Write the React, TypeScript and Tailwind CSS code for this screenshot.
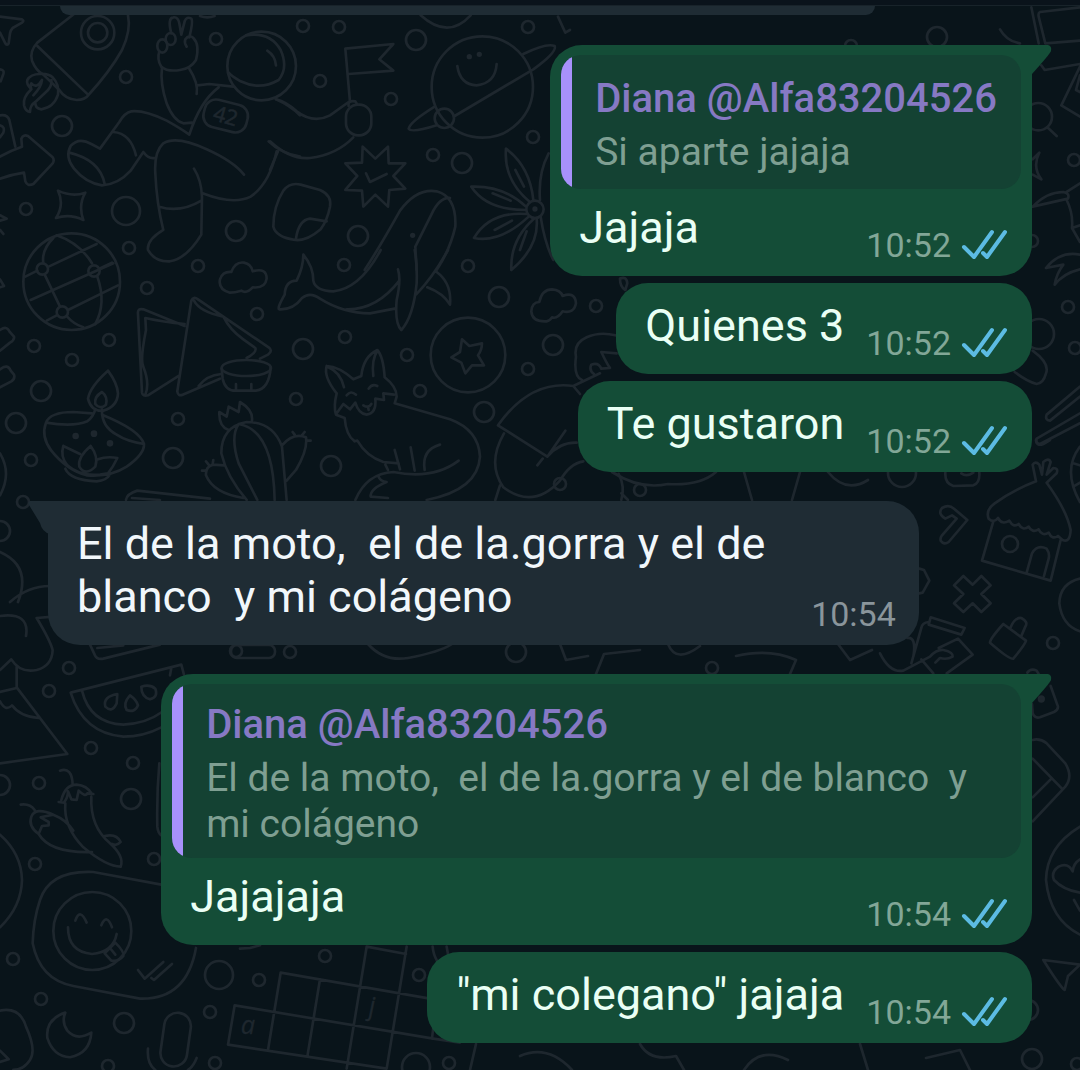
import type { ReactNode } from 'react';
import clsx from 'clsx';

interface Message {
  id: number;
  text: string;
  time: string;
  mine: boolean;
  tail?: boolean;
  quote?: { author: string; text: string };
}

const messages: Message[] = [
  {
    id: 1,
    text: 'Jajaja',
    time: '10:52',
    mine: true,
    tail: true,
    quote: { author: 'Diana @Alfa83204526', text: 'Si aparte jajaja' },
  },
  { id: 2, text: 'Quienes 3', time: '10:52', mine: true },
  { id: 3, text: 'Te gustaron', time: '10:52', mine: true },
  {
    id: 4,
    text: 'El de la moto,  el de la.gorra y el de blanco  y mi colágeno',
    time: '10:54',
    mine: false,
    tail: true,
  },
  {
    id: 5,
    text: 'Jajajaja',
    time: '10:54',
    mine: true,
    tail: true,
    quote: {
      author: 'Diana @Alfa83204526',
      text: 'El de la moto,  el de la.gorra y el de blanco  y mi colágeno',
    },
  },
  { id: 6, text: '"mi colegano" jajaja', time: '10:54', mine: true },
];

// x, y, r
const dots = [
  [216, 39, 6], [126, 77, 6], [62, 126, 10], [26, 209, 6], [126, 211, 14], [129, 248, 6],
  [236, 231, 10], [198, 266, 6], [303, 26, 6], [339, 27, 6], [320, 81, 6], [416, 40, 10],
  [391, 99, 6], [528, 27, 6], [533, 137, 6], [433, 155, 6], [462, 163, 10], [358, 236, 10],
  [344, 265, 6], [468, 266, 6], [147, 288, 6], [257, 314, 6], [34, 346, 6], [109, 340, 6],
  [72, 360, 6], [41, 391, 10], [303, 349, 10], [16, 423, 10], [296, 399, 6], [178, 419, 6],
  [173, 458, 10], [31, 460, 6], [23, 502, 6], [345, 337, 6], [407, 355, 6], [499, 297, 10],
  [553, 345, 10], [596, 306, 6], [528, 369, 6], [420, 391, 6], [484, 412, 10], [331, 466, 10],
  [69, 668, 6], [49, 691, 6], [91, 748, 6], [133, 763, 6], [39, 783, 6], [131, 799, 10],
  [0, 785, 10], [35, 864, 6], [154, 859, 6], [13, 959, 6], [219, 975, 14], [41, 999, 6],
  [124, 1023, 10], [210, 1012, 6], [215, 1063, 6], [108, 1066, 6], [236, 651, 6], [325, 956, 6],
  [259, 980, 6], [419, 975, 6], [416, 1067, 14], [449, 1063, 6], [902, 473, 14], [1010, 544, 8],
  [1053, 643, 6], [0, 531, 10], [290, 652, 6], [1074, 160, 6], [1032, 241, 6], [1068, 307, 6],
  [1075, 348, 6], [1039, 334, 15], [1032, 1059, 10], [1077, 1064, 6], [1028, 1010, 10],
  [937, 37, 10], [851, 46, 6], [516, 652, 10], [712, 668, 6], [640, 490, 6], [560, 484, 6],
];

function Doodles({ x, y, children }: { x: number; y: number; children: ReactNode }) {
  return <g transform={`translate(${x} ${y}) scale(0.3333)`}>{children}</g>;
}

function Wallpaper() {
  return (
    <svg
      aria-hidden="true"
      viewBox="0 0 1080 1070"
      preserveAspectRatio="xMidYMin slice"
      className="absolute inset-0 w-full h-full"
      fill="none"
      stroke="#1e272e"
      strokeWidth={8}
      strokeLinecap="round"
      strokeLinejoin="round"
    >
      <g strokeWidth={2.7}>
        {dots.map(([cx, cy, r]) => (
          <circle key={`${cx}-${cy}`} cx={cx} cy={cy} r={r} />
        ))}
      </g>

      <Doodles x={0} y={0}>
        {/* plane */}
        <path d="M0 50L66 58Q74 62 66 68L38 84Q32 90 30 100L26 130Q22 138 16 130L0 98" />
        <path d="M0 208Q14 210 10 222L2 244M0 346Q22 342 28 360L46 440M0 376Q16 380 10 398L0 412" />
        {/* rocket */}
        <path d="M222 42L112 128Q88 154 96 182Q108 212 130 224L178 270Q196 298 230 300Q256 300 268 282Q330 214 366 150Q394 90 384 46M112 138L264 284" />
        <circle cx="293" cy="98" r="50" />
        <circle cx="293" cy="98" r="29" />
        <path d="M120 222Q92 222 82 240Q78 252 94 268Q68 292 72 316Q76 334 90 336Q90 316 106 306Q104 326 124 328Q162 322 174 284Q178 252 158 232Q144 220 120 222M94 268Q90 256 94 250Q110 268 126 240Q124 262 100 286M154 240Q158 260 134 280L106 306" />
        {/* arrow */}
        <path d="M0 470Q30 452 66 440L64 416Q70 402 84 408L158 472Q164 480 158 490L100 552Q82 560 76 544L72 518Q32 524 0 536" />
        <path d="M174 572Q216 592 256 578Q234 616 250 660Q210 640 168 654Q194 614 174 572ZM0 646L20 656L0 662M0 690L10 702" />
        {/* astronaut */}
        <circle cx="785" cy="198" r="103" />
        <path d="M738 106Q810 94 842 150Q866 204 836 240Q780 272 722 244Q694 228 686 218M802 152Q826 168 828 196" />
        <path d="M484 200Q470 178 478 154M484 200Q502 216 540 210Q572 206 588 180Q600 134 580 114Q568 102 556 118Q552 128 560 140M514 100Q502 54 520 52Q534 50 538 70L544 104M544 104L554 64Q560 48 574 56Q580 64 568 112" />
        <ellipse cx="487" cy="138" rx="15" ry="20" />
        <ellipse cx="512" cy="117" rx="15" ry="18" />
        <path d="M486 202Q480 250 500 310Q520 362 550 370L576 368M568 206Q596 250 590 282M592 256L628 252L700 260M656 262Q600 304 568 404Q540 384 500 362Q434 330 394 334Q374 338 358 366L300 446L274 432Q236 410 212 438Q194 470 222 506Q256 548 306 556Q354 554 392 512L430 456Q446 478 464 474M340 396Q392 400 408 466M208 458Q300 480 314 552" />
        <path d="M732 524Q700 484 620 448Q530 406 490 430Q462 456 466 520Q470 610 490 690Q440 720 444 750Q464 786 510 784Q560 776 604 704L606 590Q604 540 582 506M478 620Q540 640 604 602M608 580Q700 616 752 590Q808 552 830 454M806 424Q840 458 900 470M828 298Q870 316 900 346" />
        <rect x="611" y="306" width="132" height="84" rx="34" transform="rotate(14 677 348)" />
        <text
          x="677"
          y="370"
          fontSize="64"
          fontFamily="'Open Sans', sans-serif"
          textAnchor="middle"
          fill="#1e272e"
          strokeWidth="2"
          transform="rotate(16 677 348)"
        >
          42
        </text>
        {/* globe */}
        <circle cx="215" cy="845" r="145" />
        <path d="M130 790Q124 750 160 714M146 800L290 732M170 706Q240 730 276 790M92 900L340 790M76 830L112 812" />
        <path d="M600 48Q622 56 644 48" />
      </Doodles>

      <Doodles x={270} y={0}>
        <path d="M18 298Q50 306 80 334Q130 372 180 346L236 306M0 424Q60 480 120 474Q200 464 250 412M24 454L0 510" />
        {/* flag */}
        <path d="M240 306L226 146L370 132L328 178L370 212L236 222" />
        <rect x="228" y="314" width="76" height="92" rx="36" />
        <path d="M236 318Q232 300 256 304L262 314" />
        {/* badge */}
        <path d="M278 440L316 476L354 440L356 490L406 490L370 528L406 566L358 570L354 620L316 584L280 620L276 572L226 570L262 528L226 490L276 488ZM288 520L300 546L350 522" />
        {/* planet */}
        <circle cx="637" cy="261" r="152" />
        <circle cx="523" cy="355" r="29" />
        <path d="M562 198Q570 254 620 256Q676 250 680 192M554 348L790 208Q862 156 854 138Q830 128 760 162M494 320Q420 366 416 386Q424 400 500 376M452 46Q534 120 602 46M864 50L886 98L900 90" />
        <circle cx="598" cy="170" r="4" fill="#1e272e" />
        <circle cx="628" cy="163" r="4" fill="#1e272e" />
        {/* sticker */}
        <path d="M40 572Q60 546 92 554L150 570Q186 586 180 620Q172 660 152 688Q110 724 76 720Q18 712 10 680Q10 620 40 572ZM78 716Q86 660 120 656L170 664" />
        {/* whale */}
        <path d="M284 810Q330 740 390 632Q440 564 500 574Q560 590 556 680Q540 750 500 810M540 594Q508 592 484 644L436 740L440 810" />
        <circle cx="428" cy="706" r="4" fill="#1e272e" />
        {/* flower */}
        <circle cx="795" cy="628" r="26" />
        <circle cx="795" cy="627" r="4" />
        <path d="M790 600Q780 500 708 446Q700 540 780 606M768 620Q700 556 604 560Q650 630 768 630M770 642Q660 634 612 714Q690 730 776 650M792 656Q720 720 724 810M800 656Q808 740 724 810M812 650Q824 730 850 780M810 600Q804 520 836 460M736 510L762 560M668 580L722 602M674 690L726 662M770 694L750 750" />
      </Doodles>

      <Doodles x={0} y={250}>
        <circle cx="127" cy="57" r="17" />
        <circle cx="282" cy="63" r="17" />
        <circle cx="187" cy="186" r="17" />
        <path d="M134 74L180 170M200 198Q220 222 250 232M204 180L354 106M292 80Q320 160 286 222M140 212L170 196M298 56L336 38" />
        <path d="M0 88L12 108L0 112M0 240Q20 226 28 244L42 260Q44 270 30 278L0 302M0 358Q24 340 32 362L42 374Q46 386 34 394L0 412M0 610Q36 670 0 736" />
        <path d="M690 128Q654 118 660 88Q668 64 694 66Q706 34 732 38Q754 42 758 64Q800 52 800 86Q796 116 758 112Q740 132 724 122Q704 128 690 128Z" />
        {/* samosas */}
        <path d="M554 228L430 178Q412 174 414 192L426 428Q428 440 444 436L536 378M554 222Q490 216 436 204L438 240Q420 330 430 350Q450 400 436 434M574 152Q580 138 594 148L670 200L806 292Q820 302 804 314L780 326M574 152L532 424Q534 440 548 434L660 386M582 152Q600 186 670 200Q690 240 730 268L766 294Q772 306 740 324M596 408Q620 376 664 372" />
        <ellipse cx="739" cy="354" rx="74" ry="24" />
        <path d="M665 356L668 386Q676 424 710 422L768 422Q808 416 812 352M708 402L708 418M754 402L754 418" />
        {/* diya */}
        <path d="M324 362Q270 410 264 446Q274 486 310 482Q352 470 354 430Q352 400 324 362ZM306 426Q282 440 286 462Q300 480 318 464Q324 440 306 426Z" />
        <path d="M286 478Q280 500 262 514Q220 532 138 518Q150 486 220 486L276 490M138 518Q122 560 154 602Q200 660 260 676Q330 682 380 650Q434 612 432 582Q420 540 306 494M306 478Q304 530 350 554Q380 574 432 582M190 588Q180 620 202 646Q240 680 300 674L324 670Q340 650 352 624Q320 618 294 628M190 588L240 612M272 588Q232 622 238 650Q256 680 286 650Q296 620 272 588M196 656Q210 690 290 694Q320 690 328 676" />
        <g fill="#1e272e">
          <circle cx="227" cy="558" r="6" />
          <circle cx="282" cy="551" r="6" />
          <circle cx="330" cy="580" r="6" />
        </g>
        {/* cactus */}
        <path d="M686 540Q656 530 658 486L680 500L686 470L716 486L720 456Q760 480 756 512M740 750Q680 680 664 610Q664 530 740 516Q820 516 846 590L860 750M824 750Q820 540 716 522Q690 560 716 640L772 750M846 586Q880 546 918 562Q924 600 888 660L860 692M730 744Q640 730 618 676Q616 650 640 644L672 646M878 546L884 554M914 546L906 556M932 572L922 572M618 634L626 644M640 630L638 642M606 662L616 662" />
        <path d="M378 750Q380 732 412 722L630 746M396 744L480 750" />
      </Doodles>

      <Doodles x={300} y={250}>
        {/* whale tail */}
        <path d="M10 14Q40 50 40 92Q46 122 100 124Q180 116 242 0M10 14Q10 50 -10 92Q-44 92 -46 134Q-70 176 -62 178Q-20 180 6 144Q30 124 60 146Q130 190 210 190L284 176M140 178Q230 180 298 92M294 58Q304 90 290 150Q284 220 304 240Q340 200 350 100Q352 40 344 0M444 0Q400 80 348 134M410 66Q456 100 450 164Q430 130 382 112" />
        <circle cx="504" cy="315" r="112" />
        <path d="M486 268L508 288L546 280Q546 300 534 316L552 346L516 346L496 370L484 338L454 322L480 306Z" />
        <path d="M740 214Q696 216 694 184Q696 156 718 156Q726 118 756 118Q782 120 788 138Q826 124 828 160Q822 192 788 184Q772 208 756 202Q750 212 740 214Z" />
        {/* fox */}
        <path d="M80 348Q70 380 110 430Q100 470 108 494L134 504Q138 556 164 574L172 572Q200 620 250 636L296 640M80 348Q118 350 160 388L184 378Q190 320 232 300Q250 320 254 382Q290 410 290 440L284 460L450 508Q536 540 540 620Q534 720 380 750M82 350Q122 366 132 412M220 378Q214 330 232 302M110 490L130 462L150 478L166 458Q176 492 200 494Q230 490 226 446L252 450L250 430L282 434M140 436Q152 420 168 434M206 416Q216 400 232 408M190 466Q206 476 214 462M204 470L206 480M166 750Q200 670 280 666Q400 690 476 632M420 584Q364 600 374 660M284 600L300 658M332 592L344 662M256 644L264 660M236 680Q240 694 260 696Q210 716 212 740L264 744" />
        {/* lady */}
        <path d="M846 390Q820 380 828 320Q820 280 860 262Q900 244 946 256M950 310L904 306Q920 340 930 354L904 356Q896 336 874 344Q866 360 882 372M820 408L900 370M820 408Q690 390 594 526L742 620L796 542M820 408L840 432M712 646L728 626M612 550Q560 640 610 712Q700 780 780 692Q810 640 850 634M742 620Q780 576 830 578M600 706L586 750" />
        <path d="M956 672Q976 710 964 750M964 730L984 750M960 86Q980 78 982 100L976 120Q960 110 960 86" />
      </Doodles>

      <Doodles x={0} y={640}>
        {/* cloud and slice */}
        <path d="M0 90L34 58Q60 100 110 90Q156 78 158 30Q150 0 110 -66L160 -70M50 80L50 142L202 342L0 370M0 156L50 144M0 184Q16 216 36 196Q60 230 116 234" />
        {/* watermelon */}
        <path d="M484 262Q430 290 370 290Q250 280 212 158L544 74L552 104M246 152Q270 250 370 254Q440 250 486 216M514 84L510 106M270 14L284 44Q290 60 310 56L480 14M292 24L370 16" />
        <path d="M352 162Q308 170 316 200Q336 220 350 190ZM390 166Q368 190 380 210Q404 220 414 196Q410 180 390 166ZM424 140Q424 170 450 178Q476 170 466 146Q450 132 424 140Z" />
        {/* chillies */}
        <path d="M180 392Q216 380 218 434M176 486L192 488Q204 472 204 454L214 478L230 480L236 452Q256 472 262 460L280 462M184 480Q196 434 230 434Q260 436 276 462M196 490Q190 560 250 622Q320 680 362 680Q374 650 330 610Q270 560 274 470M62 494Q90 490 104 510M116 582Q84 560 94 530Q106 500 160 524M116 582L126 558L146 556L146 546L122 532L160 524Q200 540 220 572M116 582Q150 640 276 636M314 588Q350 580 362 606Q350 620 336 612" />
        <path d="M0 584Q64 640 66 720Q64 800 0 862" />
        {/* smiling card */}
        <path d="M484 734L280 696Q150 690 120 780Q100 840 98 910Q120 1020 220 1038L420 1076Q560 1080 588 924" />
        <circle cx="277" cy="873" r="117" />
        <path d="M204 862Q204 936 276 942Q340 936 350 882M226 842Q240 802 260 848M304 856Q320 818 336 862M314 940L334 962Q356 966 370 948Q374 936 346 908ZM330 924L346 944M414 990L434 1016L490 966M454 1014L462 1020L516 972" />
        <path d="M478 370Q470 460 472 560Q474 580 484 586" />
        {/* moon, microphone */}
        <path d="M196 1118Q136 1138 142 1194Q160 1250 210 1252Q270 1240 274 1178Q230 1204 202 1172Q184 1146 196 1118Z" />
        <rect x="487" y="1118" width="80" height="162" rx="40" transform="rotate(8 527 1199)" />
        <path d="M444 1226Q440 1270 466 1290M590 1254Q580 1280 564 1290M0 1112Q60 1100 78 1160Q110 1230 90 1260Q70 1290 40 1290M0 1232L26 1258L0 1266" />
      </Doodles>

      <Doodles x={200} y={930}>
        {/* crossword */}
        <path d="M104 226L700 326L780 338M84 344L560 416M242 128L690 206M500 50L618 72M104 226L84 344M242 128L204 360M360 148L322 380M500 50L440 416M620 50L560 416M710 210L696 326M120 56L150 54L180 46M698 50Q700 74 712 94M740 50L744 72" />
        <g
          fontSize="76"
          fontFamily="'Open Sans', sans-serif"
          fontStyle="italic"
          fill="#1e272e"
          strokeWidth="1"
        >
          <text x="122" y="312">a</text>
          <text x="506" y="256">j</text>
        </g>
      </Doodles>

      <Doodles x={880} y={440}>
        {/* hut */}
        <path d="M468 124L458 74Q466 62 478 74L486 104L490 66Q506 52 512 66L500 104L520 84Q536 84 530 100L500 128Q560 210 572 270Q570 310 548 300L534 288Q516 300 506 278Q486 290 476 268Q456 280 446 260Q428 274 416 252Q400 264 388 242Q366 256 354 234Q342 250 326 236Q316 210 344 190Q400 150 468 124M340 244L306 362L512 422L542 300M440 398L456 340Q472 312 500 326Q510 340 506 356L492 408" />
        <path d="M600 20Q546 90 600 186M580 70L600 76M580 140L600 128" />
        {/* hammer, cross, padlock */}
        <path d="M196 236Q172 222 186 204Q206 192 222 206L262 240L206 306Q192 316 182 302Q180 294 186 286L230 236L216 226ZM118 386L132 390L148 422L128 458L118 460" />
        <path d="M250 408L278 434L304 408L332 436L304 462L332 490L304 516L278 490L250 516L222 490L250 462L222 436Z" />
        <path d="M370 552L438 602Q436 612 400 656Q390 660 330 608Q330 596 370 552ZM392 562Q404 532 424 534Q446 546 436 560L424 588M600 416Q540 430 538 490Q546 556 600 574" />
        {/* hand with card */}
        <path d="M152 532L254 564L244 584L146 554ZM146 546Q126 548 124 564L94 670M0 640Q30 700 70 692L150 650Q170 628 190 630Q220 636 218 650Q200 660 180 654L166 668M176 624L234 596L278 644L200 700M82 594Q110 590 100 650M124 658L160 700" />
        <path d="M442 698Q452 684 470 692L476 702M512 738L534 800Q534 810 522 816L480 832Q464 836 458 820L456 792" />
        <circle cx="484" cy="777" r="7" fill="#1e272e" />
        <path d="M196 98Q194 130 220 138L280 136Q300 130 298 98M244 100Q260 112 280 98M468 0Q470 20 490 12L510 0" />
      </Doodles>

      <Doodles x={1000} y={0}>
        <path d="M0 88Q20 124 60 130M94 22L116 130M240 22L120 36Q114 38 116 50L136 130L240 122M124 196L134 210L240 192M240 200L184 316L240 350M240 226L228 270L240 276" />
        <circle cx="115" cy="350" r="41" />
        <path d="M142 382L170 408M98 478L118 458Q96 500 124 538L98 524M98 620Q140 576 190 576Q210 580 204 596L98 620M200 576L240 550M200 600Q220 640 216 684L240 726M216 684L240 676M138 804Q180 752 240 764M138 804L190 794Q170 820 164 854Q190 820 240 808M98 1052Q150 1090 138 1120Q130 1150 110 1152Q80 1144 44 1116M240 1160L140 1244Q134 1260 150 1262L240 1190M240 1240L110 1316Q104 1330 120 1332L240 1270" />
      </Doodles>

      <Doodles x={1000} y={660}>
        <path d="M98 240Q120 234 140 250L196 310Q220 350 196 380L98 484M98 296L188 388M98 412L152 358" />
        <path d="M240 500Q140 560 138 660Q150 780 240 824M240 598Q220 610 218 634Q204 606 176 620Q152 636 162 660Q190 690 240 698M222 720L240 752M130 900L240 914L204 948L194 990Q180 980 130 900Z" />
      </Doodles>

      <g strokeWidth={2.7}>
        <path d="M0 552Q32 566 18 602M10 602Q28 586 50 586M0 616Q30 612 26 636" />
        <rect x="231" y="645" width="44" height="13" rx="6" />
        {/* strips showing between the bubbles */}
        <path d="M368 644Q384 662 408 658Q440 652 452 644M560 644L566 660L588 656M596 674L604 654L640 650M668 644Q676 664 700 646M736 656Q770 648 796 660L790 674M838 644L850 660L872 650" />
        <path d="M612 472Q640 490 668 484Q700 486 716 472M744 472L752 500M800 472L792 500M828 472Q846 494 868 480" />
        <path d="M476 1044L470 1070M520 1056Q548 1044 572 1070M640 1044Q650 1062 676 1056L684 1070M744 1070Q760 1046 788 1060M860 1044L868 1070M926 1058L960 1050L970 1070" />
      </g>
    </svg>
  );
}

function ReadTicks() {
  return (
    <svg
      role="img"
      aria-label="Leído"
      viewBox="0 0 46 32"
      className="w-[46px] h-8 ml-[10px] mb-1"
      fill="none"
      stroke="#5cbbe3"
      strokeWidth={4}
      strokeLinecap="round"
      strokeLinejoin="round"
    >
      <path d="M3 18L13 28L31 3M22 24L26 28L44 3" />
    </svg>
  );
}

function Tail({ mine }: { mine: boolean }) {
  return mine ? (
    <svg viewBox="0 0 22 30" className="absolute top-0 -right-5 w-[22px] h-[30px]" fill="#144d37">
      <path d="M0 0H18Q22 1 21 6Q20 9 2 29L0 30Z" />
    </svg>
  ) : (
    <svg viewBox="0 0 22 34" className="absolute top-0 -left-5 w-[22px] h-[34px]" fill="#1f2c34">
      <path d="M22 0H2Q-1 1 1 4L12 22Q14 31 22 33Z" />
    </svg>
  );
}

function Bubble({ message }: { message: Message }) {
  const { text, time, mine, tail, quote } = message;

  return (
    <li
      className={clsx(
        'relative w-fit max-w-[88.5%] rounded-[32px]',
        mine ? 'self-end bg-[#144d37] text-[#eafff5]' : 'self-start bg-[#1f2c34] text-[#f1f7fb]',
        tail && (mine ? 'rounded-tr-none' : 'rounded-tl-none'),
        !mine && 'my-[22px]',
      )}
    >
      {tail && <Tail mine={mine} />}
      {quote && (
        <div className="px-[11px] pt-[10px]">
          <blockquote className="flex min-h-[134px] overflow-hidden rounded-[20px] bg-[#144233]">
            <div className="w-[11px] shrink-0 bg-[#a791fb]" />
            <div className="flex flex-col justify-center pl-[23px] pr-6 pt-[17px] pb-[11px]">
              <p className="text-[40px] leading-[48px] font-medium text-[#8679c4]">
                {quote.author}
              </p>
              <p className="mt-[6px] text-[39px] leading-[46px] text-[#7f9f92] whitespace-pre-wrap">
                {quote.text}
              </p>
            </div>
          </blockquote>
        </div>
      )}
      <div
        className={clsx(
          'flex items-end justify-between gap-[22px] pl-[29px] pb-[11px]',
          mine ? 'pr-[25px]' : 'pr-[23px]',
          quote ? 'pt-3' : 'pt-4',
        )}
      >
        <p className="mb-[11px] text-[45px] leading-[53px] whitespace-pre-wrap">{text}</p>
        <div
          className={clsx('flex items-end shrink-0', mine ? 'text-[#82a797]' : 'text-[#8a959b]')}
        >
          <time className="text-[34px] leading-[40px]">{time}</time>
          {mine && <ReadTicks />}
        </div>
      </div>
    </li>
  );
}

export default function App() {
  return (
    <main className="relative min-h-screen overflow-hidden bg-[#09141a] font-[Roboto,sans-serif]">
      <Wallpaper />
      <div className="relative">
        <div className="h-[6px] bg-[#0a131b] border-b border-[#18232a]" />
        {/* bottom edge of the message scrolled under the header */}
        <div className="ml-[60px] mr-[205px] h-[9px] rounded-b-[20px] bg-[#1f2c34]" />
        <ol className="flex flex-col gap-[7px] px-12 pt-[30px] pb-6">
          {messages.map((message) => (
            <Bubble key={message.id} message={message} />
          ))}
        </ol>
      </div>
    </main>
  );
}
